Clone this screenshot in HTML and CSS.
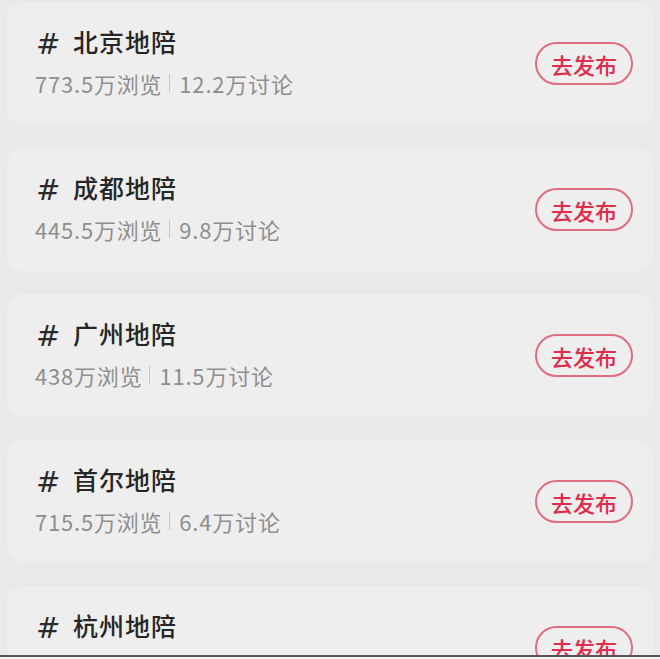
FILE: index.html
```html
<!DOCTYPE html>
<html lang="zh">
<head>
<meta charset="utf-8">
<link rel="stylesheet" href="styles.css">
</head>
<body>
<div class="list">
  <div class="card">
    <div class="info">
      <div class="title"><span class="hash">#</span>北京地陪</div>
      <div class="meta"><span>773.5万浏览</span><span class="sep"></span><span>12.2万讨论</span></div>
    </div>
    <div class="btn">去发布</div>
  </div>
  <div class="card">
    <div class="info">
      <div class="title"><span class="hash">#</span>成都地陪</div>
      <div class="meta"><span>445.5万浏览</span><span class="sep"></span><span>9.8万讨论</span></div>
    </div>
    <div class="btn">去发布</div>
  </div>
  <div class="card">
    <div class="info">
      <div class="title"><span class="hash">#</span>广州地陪</div>
      <div class="meta"><span>438万浏览</span><span class="sep"></span><span>11.5万讨论</span></div>
    </div>
    <div class="btn">去发布</div>
  </div>
  <div class="card">
    <div class="info">
      <div class="title"><span class="hash">#</span>首尔地陪</div>
      <div class="meta"><span>715.5万浏览</span><span class="sep"></span><span>6.4万讨论</span></div>
    </div>
    <div class="btn">去发布</div>
  </div>
  <div class="card">
    <div class="info">
      <div class="title"><span class="hash">#</span>杭州地陪</div>
      <div class="meta"><span>402.1万浏览</span><span class="sep"></span><span>8.7万讨论</span></div>
    </div>
    <div class="btn">去发布</div>
  </div>
</div>
<div class="edge"></div>
</body>
</html>
```
FILE: styles.css
```css
html, body {
  margin: 0;
  padding: 0;
  height: 659px;
  overflow: hidden;
  background: #e9e9e9;
  font-family: "Noto Sans CJK SC", "Noto Sans", sans-serif;
}
.list {
  display: flex;
  flex-direction: column;
  gap: 23px;
  padding: 2px 7px 0 7px;
}
.card {
  height: 123px;
  flex-shrink: 0;
  box-sizing: border-box;
  background: #eeeeee;
  border-radius: 16px;
  display: flex;
  align-items: center;
  justify-content: space-between;
  padding: 0 20px 0 28px;
}
.info {
  display: flex;
  flex-direction: column;
  gap: 9px;
  margin-top: -6px;
}
.title {
  font-size: 25px;
  line-height: 36px;
  letter-spacing: 1px;
  color: #262626;
  font-weight: 500;
  display: flex;
  align-items: center;
}
.hash {
  font-family: "DejaVu Sans", sans-serif;
  font-weight: 400;
  font-style: italic;
  width: 38px;
  padding-left: 1px;
  padding-top: 6px;
  line-height: 30px;
  box-sizing: border-box;
  font-size: 29px;
  color: #2a2a2a;
}
.meta {
  font-size: 22px;
  line-height: 30px;
  letter-spacing: 0.8px;
  color: #8e8e8e;
  display: flex;
  align-items: center;
}
.sep {
  width: 1px;
  height: 18px;
  background: #c6c6c6;
  margin: 0 9px 0 7px;
}
.btn {
  width: 98px;
  height: 43px;
  box-sizing: border-box;
  border: 2px solid #df6f80;
  border-radius: 22px;
  color: #e02c4b;
  font-size: 22px;
  font-weight: 500;
  display: flex;
  align-items: center;
  justify-content: center;
  margin-top: 0;
}
.edge {
  position: fixed;
  left: 0;
  right: 0;
  bottom: 0;
  height: 4px;
  border-top: 2px solid #555555;
  background: #f4f4f4;
  box-sizing: border-box;
}
```
